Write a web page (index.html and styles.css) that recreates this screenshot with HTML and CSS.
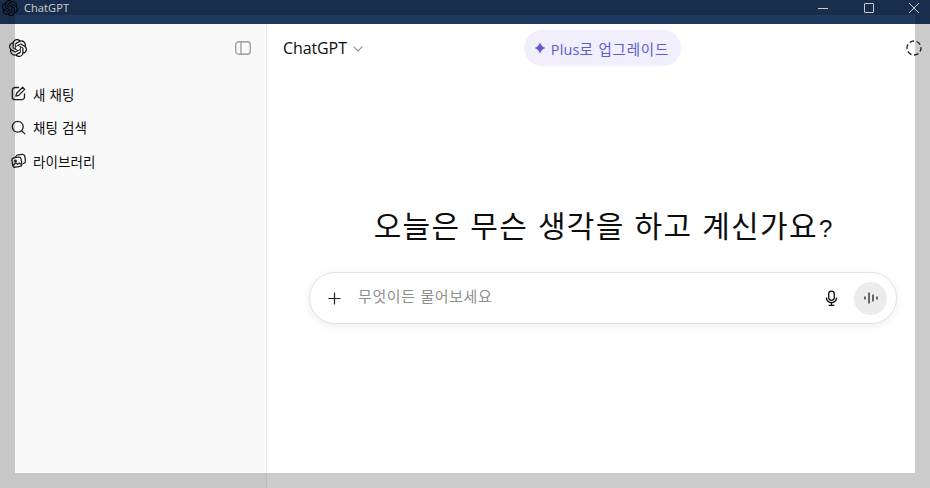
FILE: index.html
```html
<!DOCTYPE html>
<html lang="ko">
<head>
    <meta charset="UTF-8">
    <meta name="viewport" content="width=device-width, initial-scale=1.0">
    <title>ChatGPT</title>
    <link rel="stylesheet" href="styles.css">
</head>
<body>
    <svg class="sprite" width="0" height="0" aria-hidden="true">
        <symbol id="openai" viewBox="0 0 24 24">
            <path d="M22.2819 9.8211a5.9847 5.9847 0 0 0-.5157-4.9108 6.0462 6.0462 0 0 0-6.5098-2.9A6.0651 6.0651 0 0 0 4.9807 4.1818a5.9847 5.9847 0 0 0-3.9977 2.9 6.0462 6.0462 0 0 0 .7427 7.0966 5.98 5.98 0 0 0 .511 4.9107 6.051 6.051 0 0 0 6.5146 2.9001A5.9847 5.9847 0 0 0 13.2599 24a6.0557 6.0557 0 0 0 5.7718-4.2058 5.9894 5.9894 0 0 0 3.9977-2.9001 6.0557 6.0557 0 0 0-.7475-7.0729zm-9.022 12.6081a4.4755 4.4755 0 0 1-2.8764-1.0408l.1419-.0804 4.7783-2.7582a.7948.7948 0 0 0 .3927-.6813v-6.7369l2.02 1.1686a.071.071 0 0 1 .038.052v5.5826a4.504 4.504 0 0 1-4.4945 4.4944zm-9.6607-4.1254a4.4708 4.4708 0 0 1-.5346-3.0137l.142.0852 4.783 2.7582a.7712.7712 0 0 0 .7806 0l5.8428-3.3685v2.3324a.0804.0804 0 0 1-.0332.0615L9.74 19.9502a4.4992 4.4992 0 0 1-6.1408-1.6464zM2.3408 7.8956a4.485 4.485 0 0 1 2.3655-1.9728V11.6a.7664.7664 0 0 0 .3879.6765l5.8144 3.3543-2.0201 1.1685a.0757.0757 0 0 1-.071 0l-4.8303-2.7865A4.504 4.504 0 0 1 2.3408 7.872zm16.5963 3.8558L13.1038 8.364 15.1192 7.2a.0757.0757 0 0 1 .071 0l4.8303 2.7913a4.4944 4.4944 0 0 1-.6765 8.1042v-5.6772a.79.79 0 0 0-.407-.667zm2.0107-3.0231l-.142-.0852-4.7735-2.7818a.7759.7759 0 0 0-.7854 0L9.409 9.2297V6.8974a.0662.0662 0 0 1 .0284-.0615l4.8303-2.7866a4.4992 4.4992 0 0 1 6.6802 4.66zM8.3065 12.863l-2.02-1.1638a.0804.0804 0 0 1-.038-.0567V6.0742a4.4992 4.4992 0 0 1 7.3757-3.4537l-.142.0805L8.704 5.459a.7948.7948 0 0 0-.3927.6813zm1.0976-2.3654l2.602-1.4998 2.6069 1.4998v2.9994l-2.5974 1.4997-2.6067-1.4997Z"/>
        </symbol>
    </svg>

    <!-- Window title bar -->
    <header class="titlebar">
        <svg class="titlebar-logo"><use href="#openai"/></svg>
        <span class="titlebar-name">ChatGPT</span>
        <div class="window-controls">
            <svg class="win-btn" viewBox="0 0 10 10"><path d="M0 5.5h10"/></svg>
            <svg class="win-btn" viewBox="0 0 10 10"><rect x="0.5" y="0.5" width="9" height="9" rx="0.5"/></svg>
            <svg class="win-btn" viewBox="0 0 10 10"><path d="M0 0l10 10M10 0L0 10"/></svg>
        </div>
    </header>

    <div class="app">
        <!-- Sidebar -->
        <aside class="sidebar">
            <div class="sidebar-top">
                <svg class="sidebar-logo"><use href="#openai"/></svg>
                <svg class="sidebar-toggle" viewBox="0 0 16 16">
                    <rect x="0.75" y="1.75" width="14.5" height="12.5" rx="3"/>
                    <path d="M6 2v12"/>
                </svg>
            </div>
            <nav class="nav">
                <a class="nav-item">
                    <svg class="nav-icon" viewBox="0 0 16 16">
                        <path d="M8 1.600H4.400A3 3 0 0 0 1.400 4.600v7a3 3 0 0 0 3 3h7a3 3 0 0 0 3-3V8.400"/>
                        <path d="M12.400 1.400l2.200 2.200-6.400 6.400-3 .8.800-3z"/>
                    </svg>
                    <span>새 채팅</span>
                </a>
                <a class="nav-item">
                    <svg class="nav-icon" viewBox="0 0 16 16">
                        <circle cx="7.200" cy="7.200" r="5.800"/>
                        <path d="M11.400 11.400l3.400 3.400"/>
                    </svg>
                    <span>채팅 검색</span>
                </a>
                <a class="nav-item">
                    <svg class="nav-icon" viewBox="0 0 16 16">
                        <rect x="1.400" y="4.800" width="9.800" height="10" rx="2.400" transform="rotate(-10 6.300 9.800)"/>
                        <path d="M5 3.800l.4-.6a2.400 2.400 0 0 1 2-1.200l4.600-.6a2.600 2.600 0 0 1 2.800 2.200l.6 4.600a2.400 2.400 0 0 1-2 2.800"/>
                        <circle cx="4.800" cy="8.400" r="0.900"/>
                        <path d="M2.400 13l2.600-2.400 2 1.400 1.600-1.400 2.400 1.600"/>
                    </svg>
                    <span>라이브러리</span>
                </a>
            </nav>
        </aside>

        <!-- Main area -->
        <main class="main">
            <div class="topbar">
                <div class="model">
                    <span>ChatGPT</span>
                    <svg class="chevron" viewBox="0 0 10 6"><path d="M0.7 0.7L5 5l4.3-4.3"/></svg>
                </div>
                <button class="upgrade">
                    <svg class="spark" viewBox="0 0 12 12"><path d="M6 .3Q7.200 4.800 11.700 6 7.200 7.200 6 11.700 4.800 7.200 .3 6 4.800 4.800 6 .3z"/></svg>
                    <span><b>Plus</b>로 업그레이드</span>
                </button>
                <svg class="temp-chat" viewBox="0 0 16 16"><circle cx="8" cy="8" r="7"/></svg>
            </div>

            <section class="hero">
                <h1>오늘은 무슨 생각을 하고 계신가요<span class="qmark">?</span></h1>
                <div class="composer">
                    <svg class="composer-plus" viewBox="0 0 14 14"><path d="M7 0.500v13M0.500 7h13"/></svg>
                    <span class="placeholder">무엇이든 물어보세요</span>
                    <svg class="mic" viewBox="0 0 14 18">
                        <rect x="4" y="1" width="6" height="10" rx="3"/>
                        <path d="M1.500 8a5.500 5.500 0 0 0 11 0M7 13.500V16.500M4 16.500h6"/>
                    </svg>
                    <span class="voice">
                        <svg viewBox="0 0 14 12">
                            <path d="M1 4.500v3M5 .5v11M9 2.500v7M13 4.500v3"/>
                        </svg>
                    </span>
                </div>
            </section>
        </main>
    </div>

    <!-- Dimmed screenshot frame -->
    <div class="dim dim-top"></div>
    <div class="dim dim-left"></div>
    <div class="dim dim-right"></div>
    <div class="dim dim-bottom"></div>
</body>
</html>
```

FILE: styles.css
```css
/* General Page Styling */
html, body {
    margin: 0;
    padding: 0;
    height: 100%;
}

body {
    display: flex;
    flex-direction: column;
    width: 930px;
    height: 488px;
    overflow: hidden;
    position: relative;
    background: #ffffff;
    color: #0d0d0d;
    font-family: "Noto Sans CJK KR", "Noto Sans", sans-serif;
}

h1, p {
    margin: 0;
}

.sprite {
    position: absolute;
}

/* Title Bar */
.titlebar {
    display: flex;
    align-items: flex-start;
    height: 24px;
    flex: none;
    background: #1f3a5f;
    color: #ffffff;
}

.titlebar-logo {
    width: 16px;
    height: 16px;
    margin: 0 0 0 2px;
    fill: #000000;
}

.titlebar-name {
    margin-left: 6px;
    font-family: "Open Sans", sans-serif;
    font-size: 11px;
    letter-spacing: 0.1px;
    line-height: 16px;
}

.window-controls {
    display: flex;
    gap: 35.500px;
    margin-left: auto;
    padding: 3px 11px 0 0;
}

.win-btn {
    width: 10px;
    height: 10px;
    fill: none;
    stroke: #ffffff;
    stroke-width: 1;
}

/* App Layout */
.app {
    display: flex;
    flex: 1;
    min-height: 0;
}

.sidebar {
    width: 266px;
    flex: none;
    background: #f9f9f9;
    border-right: 1px solid #ececec;
}

.sidebar-top {
    display: flex;
    align-items: center;
    justify-content: space-between;
    height: 48px;
    padding: 0 15px 0 9px;
}

.sidebar-logo {
    width: 18px;
    height: 18px;
    fill: #0d0d0d;
}

.sidebar-toggle {
    width: 16px;
    height: 16px;
    fill: none;
    stroke: #9b9b9b;
    stroke-width: 1.300;
}

.nav {
    display: flex;
    flex-direction: column;
    padding: 5px 0 0 11px;
}

.nav-item {
    display: flex;
    align-items: center;
    gap: 7px;
    height: 33.500px;
    font-size: 13.500px;
    letter-spacing: 0.1px;
    color: #0d0d0d;
}

.nav-icon {
    width: 15px;
    height: 15px;
    fill: none;
    stroke: #222222;
    stroke-width: 1.400;
    stroke-linecap: round;
    stroke-linejoin: round;
}

/* Main Area */
.main {
    display: flex;
    flex-direction: column;
    flex: 1;
    min-width: 0;
}

.topbar {
    display: flex;
    align-items: center;
    height: 48px;
    padding: 0 8px 0 16px;
}

.model {
    display: flex;
    align-items: center;
    gap: 6px;
    font-family: "Open Sans", sans-serif;
    font-size: 16px;
    letter-spacing: -0.1px;
}

.chevron {
    width: 10px;
    height: 6px;
    margin-top: 2px;
    fill: none;
    stroke: #8f8f8f;
    stroke-width: 1.100;
}

.upgrade {
    display: flex;
    align-items: center;
    gap: 5px;
    height: 36px;
    margin-left: 161px;
    padding: 0 12px 0 10px;
    border: 0;
    border-radius: 18px;
    background: #f0effb;
    color: #5e5ccf;
    font-family: inherit;
    font-size: 14.500px;
    letter-spacing: 0.800px;
    white-space: nowrap;
}

.upgrade b {
    font-weight: 500;
    font-family: "Open Sans", sans-serif;
    letter-spacing: 0.100px;
}

.spark {
    width: 12px;
    height: 12px;
    fill: #5e5ccf;
}

.temp-chat {
    width: 16px;
    height: 16px;
    margin-left: auto;
    fill: none;
    stroke: #222222;
    stroke-width: 1.300;
    stroke-dasharray: 4.800 2.530;
    stroke-dashoffset: 1.200;
}

/* Hero */
.hero {
    display: flex;
    flex-direction: column;
    padding: 132px 33px 0 42px;
}

h1 {
    font-size: 30px;
    font-weight: 400;
    letter-spacing: 1.350px;
    line-height: 40px;
    text-align: center;
    color: #0d0d0d;
}

.qmark {
    margin-left: 1px;
    font-family: "Liberation Sans", sans-serif;
    font-size: 24px;
    letter-spacing: 0;
}

.composer {
    display: flex;
    align-items: center;
    height: 52px;
    box-sizing: border-box;
    margin-top: 23px;
    padding: 0 9px 0 18px;
    border: 1px solid #e3e3e3;
    border-radius: 26px;
    background: #ffffff;
    box-shadow: 0 2px 8px rgba(0, 0, 0, 0.08);
}

.composer-plus {
    width: 13px;
    height: 13px;
    fill: none;
    stroke: #222222;
    stroke-width: 1.300;
}

.placeholder {
    margin-left: 17px;
    padding-bottom: 6px;
    font-size: 15px;
    letter-spacing: 0.600px;
    color: #8f8f8f;
}

.mic {
    width: 13px;
    height: 17px;
    margin-left: auto;
    fill: none;
    stroke: #0d0d0d;
    stroke-width: 1.400;
}

.voice {
    display: flex;
    align-items: center;
    justify-content: center;
    width: 33px;
    height: 33px;
    margin-left: 16px;
    border-radius: 50%;
    background: #ececec;
}

.voice svg {
    width: 14px;
    height: 12px;
    fill: none;
    stroke: #222222;
    stroke-width: 1.300;
}

/* Dimmed Frame */
.dim {
    position: absolute;
    background: rgba(0, 0, 0, 0.2);
}

.dim-top { top: 0; left: 0; right: 0; height: 15px; }
.dim-left { top: 15px; left: 0; bottom: 15px; width: 15px; }
.dim-right { top: 15px; right: 0; bottom: 15px; width: 15px; }
.dim-bottom { left: 0; right: 0; bottom: 0; height: 15px; }
```
